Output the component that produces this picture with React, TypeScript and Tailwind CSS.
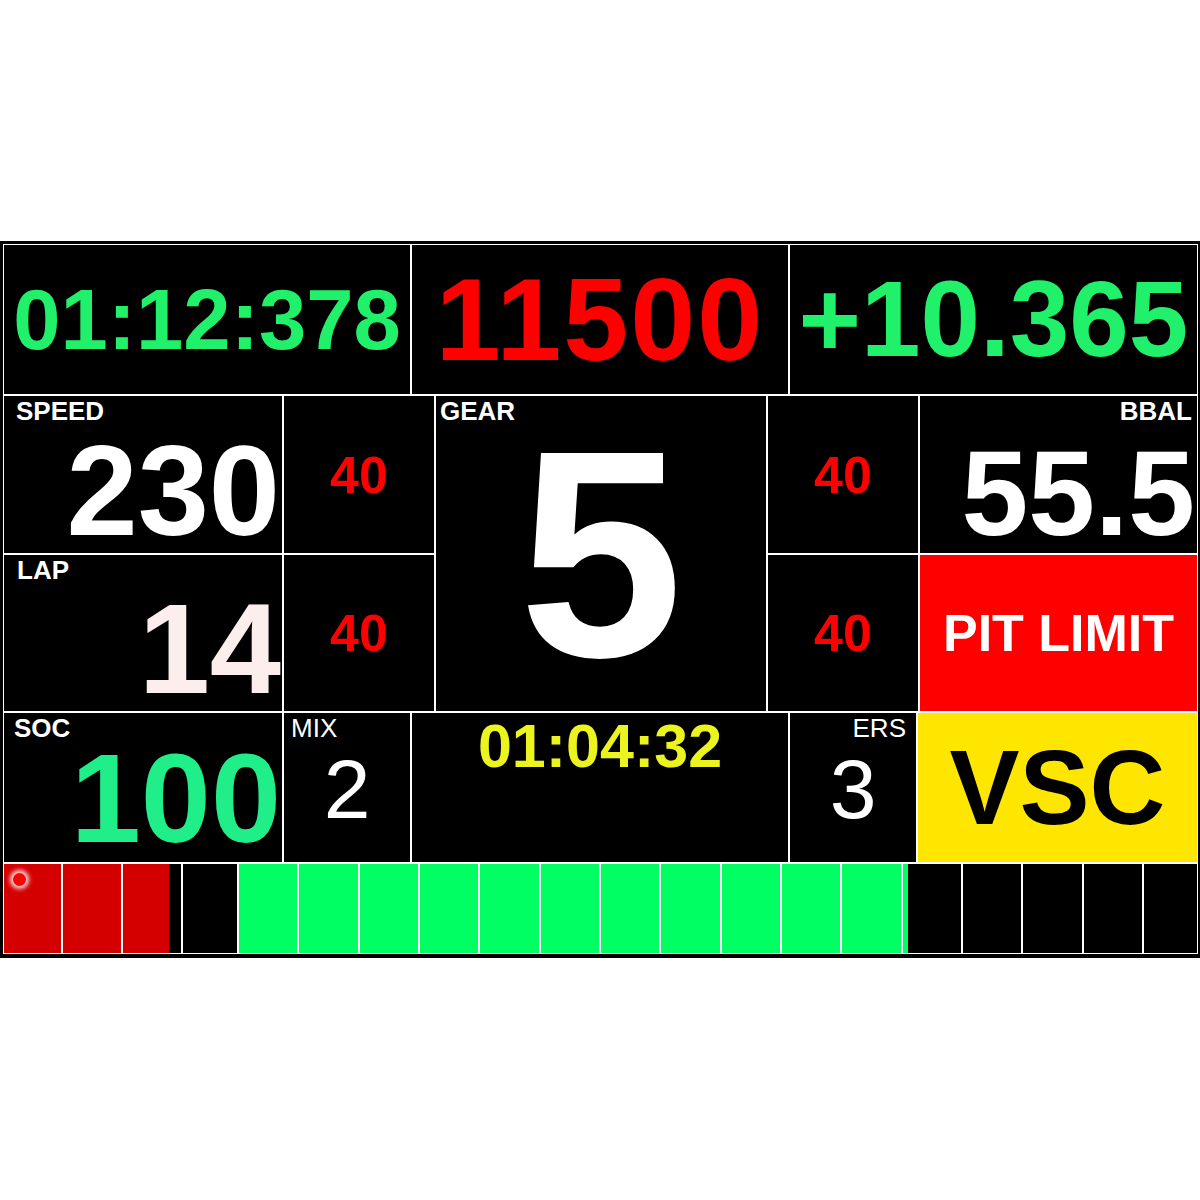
type BarCell = { color: 'red' | 'green' | 'off'; fill?: string }

const barCells: BarCell[] = [
  { color: 'red' },
  { color: 'red' },
  { color: 'red', fill: 'w-[46px]' },
  { color: 'off' },
  ...Array.from({ length: 11 }, () => ({ color: 'green' as const })),
  { color: 'green', fill: 'w-[5px]' },
  { color: 'off' },
  { color: 'off' },
  { color: 'off' },
  { color: 'off' },
]

function Bar() {
  return (
    <div className="grid h-[89px] grid-cols-[57px_58px_58px_54px_repeat(15,minmax(0,1fr))_53px] gap-[2px]">
      {barCells.map((cell, i) => {
        const bg = cell.color === 'red' ? 'bg-[#d40000]' : cell.color === 'green' ? 'bg-[#00ff62]' : 'bg-black'
        return (
          <div key={i} className={`relative ${cell.fill ? 'bg-black' : bg}`}>
            {cell.fill && <div className={`h-full ${cell.fill} ${bg}`} />}
            {i === 0 && (
              <div className="absolute left-[9px] top-[9px] h-[13px] w-[13px] rounded-full bg-[#ff0000] shadow-[0_0_4px_3px_rgba(255,255,255,0.85)]" />
            )}
          </div>
        )
      })}
    </div>
  )
}

function Label({ children, align = 'left', bold = true }: { children: string; align?: 'left' | 'right'; bold?: boolean }) {
  return (
    <div className={`text-[26px] leading-none text-white ${bold ? 'font-bold' : 'font-normal'} ${align === 'right' ? 'text-right' : ''}`}>
      {children}
    </div>
  )
}

function RedSmall() {
  return <div className="flex flex-1 items-center justify-center bg-black text-[52px] font-bold leading-none text-[#ff0000]">40</div>
}

export default function App() {
  return (
    <div className="min-h-[1200px] bg-white pt-[241px] font-['Liberation_Sans',Arial,sans-serif]">
      <div className="h-[717px] w-[1200px] bg-black pb-[4px] pl-[3px] pr-[2px] pt-[3px]">
        <div className="flex flex-col gap-[2px] bg-white p-[1px]">
          {/* top row */}
          <div className="flex h-[149px] gap-[2px]">
            <div className="flex w-[406px] items-center justify-center bg-black text-[85px] font-bold leading-none text-[#20f06a]">
              01:12:378
            </div>
            <div className="flex w-[376px] items-center justify-center bg-black text-[117px] font-bold leading-none tracking-[2px] text-[#ff0000]">
              11500
            </div>
            <div className="flex w-[407px] items-center justify-center bg-black text-[107px] font-bold leading-none text-[#20f06a]">
              +10.365
            </div>
          </div>

          {/* middle block */}
          <div className="flex h-[315px] gap-[2px]">
            <div className="flex w-[278px] flex-col gap-[2px]">
              <div className="h-[157px] bg-black pl-[12px] pr-[2px] pt-[2px]">
                <Label>SPEED</Label>
                <div className="mt-[3px] text-right text-[128px] font-bold leading-none text-white">230</div>
              </div>
              <div className="h-[156px] bg-black pl-[13px] pr-[1px] pt-[2px]">
                <Label>LAP</Label>
                <div className="mt-[2px] text-right text-[128px] font-bold leading-none text-[#fdeeee]">14</div>
              </div>
            </div>
            <div className="flex w-[150px] flex-col gap-[2px]">
              <div className="flex h-[157px]">
                <RedSmall />
              </div>
              <div className="flex h-[156px]">
                <RedSmall />
              </div>
            </div>
            <div className="w-[330px] bg-black pl-[4px] pt-[2px]">
              <Label>GEAR</Label>
              <div className="-mt-[17px] pr-[4px] text-center text-[295px] font-bold leading-none text-white">5</div>
            </div>
            <div className="flex w-[150px] flex-col gap-[2px]">
              <div className="flex h-[157px]">
                <RedSmall />
              </div>
              <div className="flex h-[156px]">
                <RedSmall />
              </div>
            </div>
            <div className="flex w-[277px] flex-col gap-[2px]">
              <div className="h-[157px] bg-black pr-[5px] pt-[2px]">
                <Label align="right">BBAL</Label>
                <div className="mr-[-3px] mt-[9px] text-right text-[120px] font-bold leading-none text-white">55.5</div>
              </div>
              <div className="flex h-[156px] items-center justify-center bg-[#ff0000] text-[52px] font-bold leading-none text-white">
                PIT LIMIT
              </div>
            </div>
          </div>

          {/* lower row */}
          <div className="flex h-[149px] gap-[2px]">
            <div className="w-[278px] bg-black pl-[10px] pr-[1px] pt-[2px]">
              <Label>SOC</Label>
              <div className="-mt-[5px] text-right text-[126px] font-bold leading-none text-[#20ee88]">100</div>
            </div>
            <div className="w-[126px] bg-black pl-[7px] pt-[2px]">
              <Label bold={false}>MIX</Label>
              <div className="mt-[6px] pr-[7px] text-center text-[84px] leading-none text-white">2</div>
            </div>
            <div className="w-[376px] bg-black pt-[3px] text-center text-[61px] font-bold leading-none text-[#ebf41f]">
              01:04:32
            </div>
            <div className="w-[126px] bg-black pr-[10px] pt-[2px]">
              <Label align="right" bold={false}>ERS</Label>
              <div className="mr-[-10px] mt-[6px] text-center text-[84px] leading-none text-white">3</div>
            </div>
            <div className="flex w-[279px] items-center justify-center bg-[#ffe600] text-[105px] font-bold leading-none text-black">
              VSC
            </div>
          </div>

          <Bar />
        </div>
      </div>
    </div>
  )
}
